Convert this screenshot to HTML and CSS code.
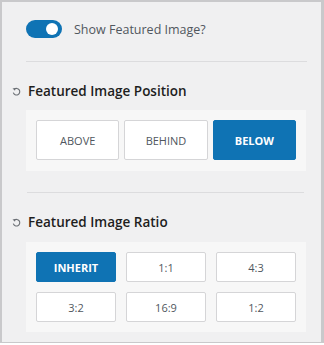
FILE: index.html
```html
<!DOCTYPE html>
<html lang="en">
<head>
    <meta charset="UTF-8">
    <meta name="viewport" content="width=device-width, initial-scale=1.0">
    <title>Featured Image Settings</title>
    <link rel="stylesheet" href="styles.css">
</head>
<body>
    <div class="frame">
        <div class="toggle-row">
            <span class="toggle"><span class="knob"></span></span>
            <span class="toggle-label">Show Featured Image?</span>
        </div>
        <hr class="divider">

        <div class="setting-title">
            <svg class="reset" width="9" height="9" viewBox="0 0 9 9">
                <path d="M2.3 2.2 A3.3 3.3 0 1 1 1.3 5.7" fill="none" stroke="#6b6f74" stroke-width="1.1"/>
                <path d="M0.5 1.6 L3.4 0.9 L3.0 3.7 Z" fill="#6b6f74"/>
            </svg>
            <span>Featured Image Position</span>
        </div>
        <div class="panel position-panel">
            <button class="opt">ABOVE</button>
            <button class="opt">BEHIND</button>
            <button class="opt active">BELOW</button>
        </div>
        <hr class="divider second">

        <div class="setting-title">
            <svg class="reset" width="9" height="9" viewBox="0 0 9 9">
                <path d="M2.3 2.2 A3.3 3.3 0 1 1 1.3 5.7" fill="none" stroke="#6b6f74" stroke-width="1.1"/>
                <path d="M0.5 1.6 L3.4 0.9 L3.0 3.7 Z" fill="#6b6f74"/>
            </svg>
            <span>Featured Image Ratio</span>
        </div>
        <div class="panel ratio-panel">
            <button class="opt small active">INHERIT</button>
            <button class="opt small">1:1</button>
            <button class="opt small">4:3</button>
            <button class="opt small">3:2</button>
            <button class="opt small">16:9</button>
            <button class="opt small">1:2</button>
        </div>
    </div>
</body>
</html>
```

FILE: styles.css
```css
body {
    margin: 0;
    background: #ffffff;
    font-family: 'Open Sans', 'Noto Sans', sans-serif;
}

.frame {
    box-sizing: border-box;
    width: 324px;
    height: 343px;
    background: #f0f0f1;
    border-style: solid;
    border-color: #c9c9cb;
    border-width: 2px 3px 1px 2px;
    padding-top: 18px;
}

.toggle-row {
    display: flex;
    align-items: center;
    gap: 12px;
    padding-left: 24px;
    height: 18px;
}

.toggle {
    position: relative;
    width: 36px;
    height: 18px;
    border-radius: 9px;
    background: #0f73b4;
}

.toggle .knob {
    position: absolute;
    right: 4px;
    top: 3px;
    width: 12px;
    height: 12px;
    border-radius: 50%;
    background: white;
}

.toggle-label {
    font-size: 12.5px;
    color: #50575e;
}

.divider {
    border: none;
    border-top: 1px solid #dcdcde;
    margin: 23px 14px 0 24px;
    height: 0;
}

.divider.second {
    margin: 21px 17px 0 25px;
}

.setting-title {
    display: flex;
    align-items: center;
    gap: 7px;
    padding-left: 10px;
    margin-top: 20px;
    height: 18px;
    font-size: 13.5px;
    font-weight: 600;
    color: #1e1e1e;
}

.reset {
    flex: none;
}

.panel {
    margin: 10px 15px 0 24px;
    padding: 10px;
    background: #f7f7f7;
    display: grid;
}

.position-panel {
    grid-template-columns: repeat(3, 1fr);
    gap: 5px;
    padding-bottom: 11px;
}

.ratio-panel {
    margin-top: 11px;
    grid-template-columns: repeat(3, 1fr);
    gap: 10px;
}

.opt {
    height: 40px;
    font-family: inherit;
    font-size: 11px;
    color: #50575e;
    background: white;
    border: 1px solid #d5d5d7;
    border-radius: 2px;
    padding: 0;
    cursor: pointer;
}

.opt.small {
    height: 30px;
}

.opt.active {
    background: #0f73b4;
    border-color: #0f73b4;
    color: white;
    font-weight: 700;
}
```
